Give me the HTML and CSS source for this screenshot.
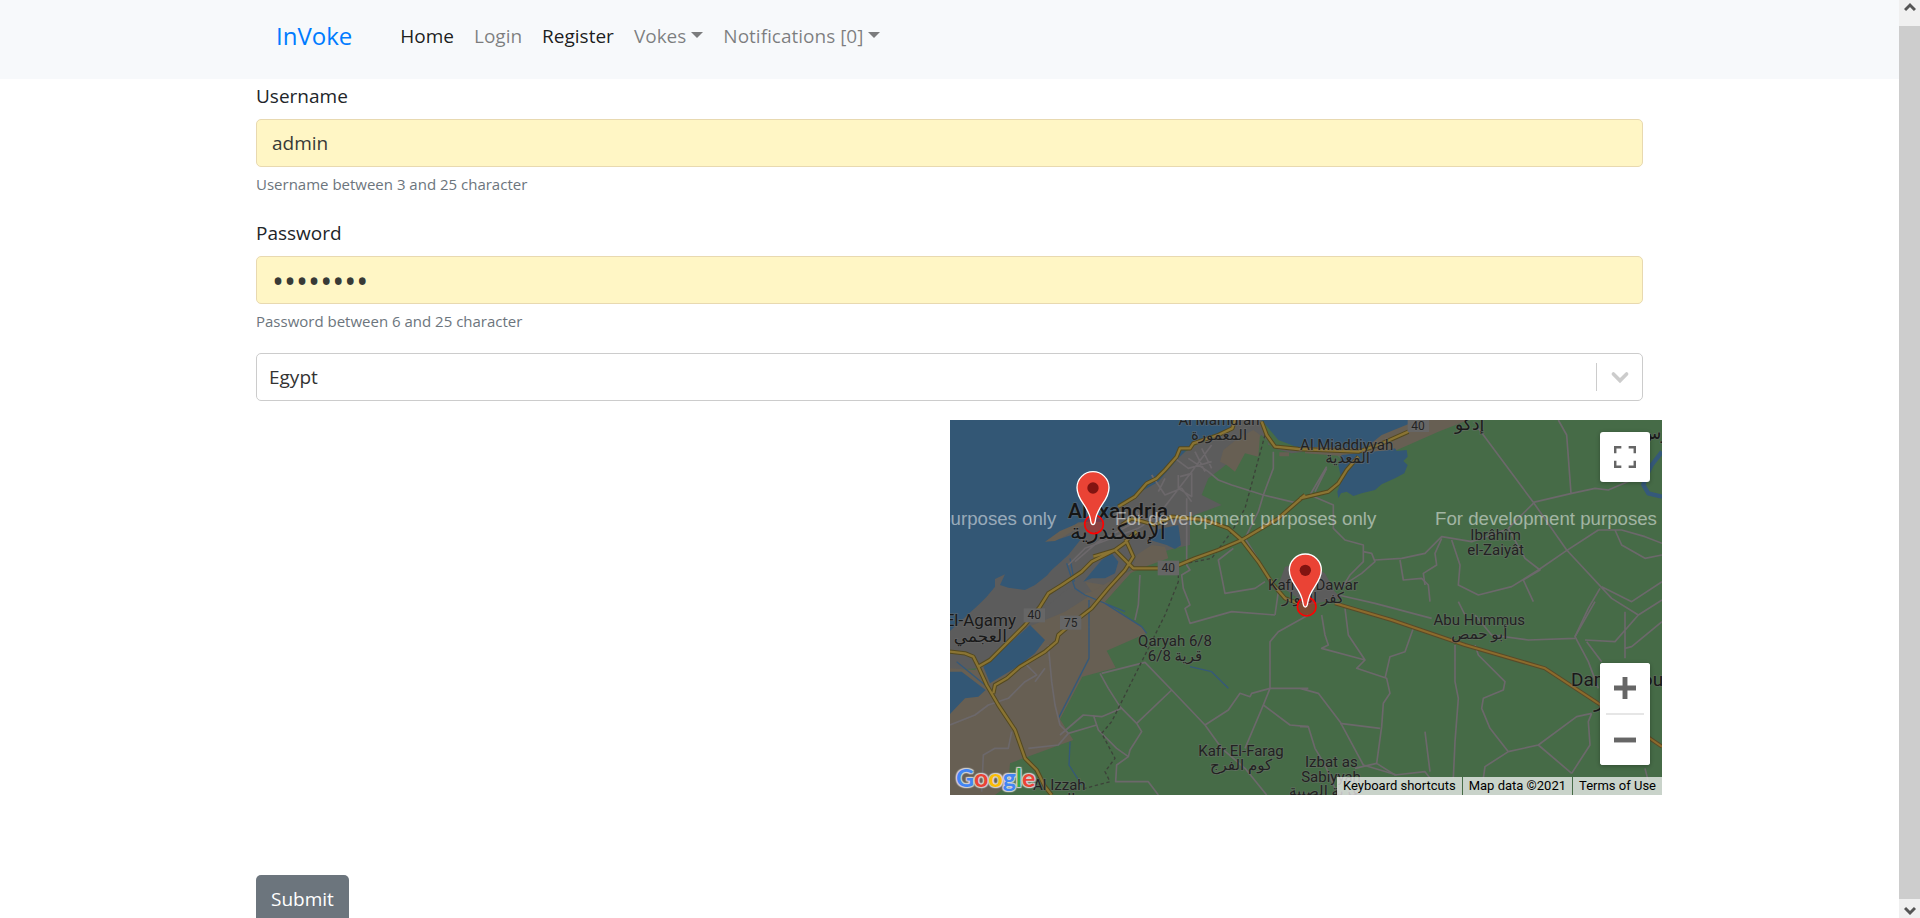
FILE: index.html
```html
<!DOCTYPE html>
<html lang="en">
<head>
<meta charset="utf-8">
<title>InVoke - Register</title>
<link rel="stylesheet" href="styles.css">
</head>
<body>
<div class="shell">
  <div class="page">
    <header class="navbar">
      <nav class="container navbar-inner">
        <a class="brand" href="#">InVoke</a>
        <a class="nav-link active" href="#">Home</a>
        <a class="nav-link" href="#">Login</a>
        <a class="nav-link active" href="#">Register</a>
        <a class="nav-link dropdown" href="#">Vokes</a>
        <a class="nav-link dropdown" href="#">Notifications [0]</a>
      </nav>
    </header>
    <main class="container">
      <form class="form">
        <div class="field">
          <label for="username">Username</label>
          <input class="control" id="username" type="text" value="admin">
          <small>Username between 3 and 25 character</small>
        </div>
        <div class="field">
          <label for="password">Password</label>
          <input class="control control-password" id="password" type="password" value="password">
          <small>Password between 6 and 25 character</small>
        </div>
        <div class="select-wrap">
          <select class="select" aria-label="Country"><option>Egypt</option></select>
          <svg class="chevron" viewBox="0 0 20 20" aria-hidden="true"><path d="M4.500 7.500 10 13l5.500-5.500"/></svg>
        </div>
        <div class="map-row">
          <div class="map">
            <svg class="map-canvas" viewBox="15 15 2136 1125" preserveAspectRatio="xMidYMid slice" role="img" aria-label="Map of Alexandria">
              <rect class="green" x="15" y="15" width="2136" height="1125"/>
              <path class="urban" d="M15 570H60L130 450 290 320 440 290 870 15H950L970 90 1080 110 1040 115 985 100 950 60 900 100 830 160 790 190 770 240 830 270 735 305 735 390 690 400 620 420 520 490 440 575 300 700 100 760 15 765Z"/>
              <path class="sand" d="M885 65 925 45 945 60 940 125 900 115 870 170 845 150 825 140 835 105Z M1003 112H1032V124H1003Z M575 420 620 390 660 395 670 430 600 455 555 475Z M420 500 480 510 540 480 560 470 470 570 450 545Z M300 375 345 345 385 325 360 355 325 375Z"/>
              <path class="sand" d="M15 760 90 765 200 670 290 600 330 555 440 530 510 490 570 460 480 560 590 635 605 655 485 707 512 758 412 785 345 913 385 975 195 1045 190 1110 150 1140H15Z"/>
              <path class="urban" d="M95 760 250 620 370 520 430 545 360 590 240 640 150 720Z M1020 455 1080 440 1140 475 1170 530 1190 550 1090 570 1000 510Z"/>
              <path class="water" d="M15 15H870L850 45 740 90 700 130 640 200 570 240 520 270 500 295 470 320 400 322 360 350 310 376 350 370 335 375 395 355 410 370 370 420 320 465 305 482 270 510 240 525 190 518 165 510 180 478 150 492 150 515 125 545 100 570 15 648Z"/>
              <path class="water" d="M415 500 470 435 500 415 520 440 510 475 480 490 440 490Z M630 345 700 330 708 390 690 402 665 390 615 375Z M115 755 255 630 300 675 270 715 225 750 135 805Z M15 770 50 770 122 825 100 845 60 850 15 897Z"/>
              <path class="water" d="M950 15H1430L1390 30 1250 110 1065 100 1000 75Z"/>
              <path class="sand" d="M1420 15H1570L1480 50 1390 90 1340 112 1220 125 1080 115 1080 95 1260 100 1310 60Z"/>
              <path class="sand" d="M300 380 345 348 400 325 440 318 400 338 350 368 330 378Z"/>
              <path class="water" d="M1190 120 1330 105 1350 100 1355 108 1385 105 1388 125 1375 138 1388 150 1378 175 1350 190 1310 208 1290 225 1250 235 1225 243 1205 230 1188 235 1180 250 1177 230 1190 195 1180 150Z"/>
              <g class="canal">
                <path d="M365 445 390 520 420 540 540 590M432 555V730L340 910M480 565 590 635 605 655M375 430 388 500M735 755 800 770 850 820M375 980 372 1050 410 1110M35 740 120 810"/>
                <path class="canal-wide" d="M2151 110 2120 150 2105 180 2095 210 2110 235 2151 245"/>
              </g>
              <g class="lane">
                <path d="M370 450 420 400 580 340 640 300 740 170 800 90M390 440 460 380 610 300M620 180 660 240 710 220 740 260M560 280 620 330M690 130 730 160 800 140M700 180V220L740 245V175L705 185M660 190 640 230M730 130 790 170 820 195 860 210 955 240 1060 265M750 110 780 170M770 100 800 160M725 250V450L735 465 710 480 715 520 735 570 720 580 735 625 860 590 990 600"/>
                <path d="M865 400 820 435 840 535 930 520 960 500M985 110 985 160 955 240 940 290 900 370 1000 530 990 600M1145 155 1095 240 1165 270 1165 340 1200 375 1255 390 1255 440 1215 480 1190 520M1110 230 1145 160M1255 410 1280 415 1290 440 1250 475 1180 520M1290 435 1370 430 1440 415 1490 365 1580 380 1680 345M1365 435 1375 495 1430 490 1450 510 1455 560"/>
                <path d="M1520 375 1545 450 1540 510 1600 540 1700 515 1780 465 1860 410 1960 345 2030 345 2100 365 2151 385M1490 370 1470 415 1475 450 1435 475 1440 510M1600 40 1765 262 1865 405 2000 550 2080 600M1765 262 1880 235 1950 220 1990 225 2060 195M1840 15 1865 60 1878 235M1765 265 1690 340 1740 430 1785 465 1735 495 1765 560M1965 520 1930 580 1890 665M1970 515 2060 560 2151 500M2010 345 2030 390 2100 430 2151 420"/>
                <path d="M465 775 490 820 525 875 575 925 590 950 555 1005 550 1025 515 1050 512 1100H610L640 1140M345 960 415 900 470 905 530 880M370 955 455 930 M445 900 460 945 515 1000 550 1025M470 775 600 742 680 825 780 930 830 1000 900 1060 965 1140M575 925 680 825M780 930 850 885 885 835 915 845 920 835 975 820 975 680 1000 650 1090 600M975 820 955 870 900 1000M955 870 1035 930 1090 935 1110 1000 1140 1050 1170 1120M1065 820 1120 835 1185 920 1255 1050 1355 1080M975 820 1090 820"/>
                <path d="M1130 600 1140 660 1150 690 1130 700 1260 735 1235 760 1325 790 1335 835 1315 865 1310 935 1295 1045M1185 925 1305 940M1230 1060 1295 1045 1350 1080 1440 1070 1455 1090M1405 640 1380 710 1335 725 1320 790M1200 580 1210 660 1230 690 1260 735M1180 540 1290 565 1460 610M1530 690 1530 800 1540 850 1530 980 1525 1090M1590 690 1600 720 1680 800 1675 825 1615 850 1610 880 1635 940 1690 1010 1620 1055 1615 1090M1690 1010 1780 990 1895 905 1940 895M1780 990 1880 1075M1940 895 1930 920 1935 990 1880 1075M1950 560 1890 665 1930 740 1960 820M1920 675 2010 680 2080 600 2151 555M1890 670 1750 675 1640 660 1590 600M1925 680 1970 740M2040 730V590M2040 700 2060 695 2151 620M1540 560 1560 600"/>
                <path d="M15 930 90 900 130 870 190 850 240 800 275 780 240 745M310 690 320 800 330 870 345 930 370 955 340 990 250 1000M110 1130 115 1020 150 1000 190 1000 200 950M300 760 270 800M585 480 580 570 570 615M1440 950 1455 1070M2110 1100 2100 1060M1065 935 1090 935"/>
              </g>
              <path class="rail" d="M960 60 900 280 860 350 800 430 700 450 700 500 660 600 600 720 500 920 470 955 510 1030 480 1070 495 1100 420 1120"/>
              <g class="road-edge"><path id="roads" d="M870 15 862 40 820 60 745 85 735 100 705 100 695 125 660 165 635 190 605 205 570 245 520 275M530 330 560 310 630 330 680 305 780 315 850 340 890 375 940 440 985 510 1020 550 1060 565M1080 240 1000 310 890 375 820 405 750 430 690 455 640 460 565 460 510 405 445 425M545 380 565 425 540 465 490 520 440 580 375 630 340 660 335 680 300 710 225 755 185 790 150 810 145 835M545 380 510 405 440 440 410 470 350 510 310 535 285 575 240 630 135 735 100 755M15 710 60 715 85 725 100 755 125 810 160 870 210 945 240 1030 275 1065 300 1115 320 1140M1065 250 1150 230 1180 205 1205 165 1240 125M950 20 965 60 990 95 1060 102 1240 110 1300 90 1390 50M575 350 540 380"/></g>
              <use class="road" href="#roads"/>
              <path class="highway-edge" d="M1170 565 1340 615 1560 690 1800 760 1960 865 2151 995"/>
              <path class="highway" d="M1170 565 1340 615 1560 690 1800 760 1960 865 2151 995"/>
              <g class="shield"><rect x="638" y="437" width="64" height="44"/><rect x="236" y="580" width="64" height="42"/><rect x="345" y="602" width="64" height="42"/><rect x="1388" y="5" width="64" height="46"/></g>
              <g class="place place-road"><text x="670" y="472">40</text><text x="268" y="612">40</text><text x="377" y="635">75</text><text x="1419" y="44">40</text></g>
              <g class="place">
                <text x="822" y="30">Al Mamurah</text><text x="822" y="74">المعمورة</text>
                <text x="1205" y="104">Al Miaddiyyah</text><text x="1208" y="144">المعدية</text>
                <text x="1652" y="374">Ibrâhîm</text><text x="1652" y="419">el-Zaiyât</text>
                <text x="1104" y="524">Kafr El Dawar</text><text x="1104" y="564">كفر الدوار</text>
                <text x="1603" y="631">Abu Hummus</text><text x="1603" y="672">أبو حمص</text>
                <text x="690" y="694">Qaryah 6/8</text><text x="690" y="738">قرية 6/8</text>
                <text x="888" y="1022">Kafr El-Farag</text><text x="888" y="1066">كوم الفرج</text>
                <text x="1159" y="1056">Izbat as</text><text x="1158" y="1100">Sabiyyah</text><text x="1140" y="1142">عزبة الصبية</text>
                <text x="343" y="1126">Al Izzah</text><text x="343" y="1166">العزة</text>
              </g>
              <g class="place place-town">
                <text x="106" y="634">El-Agamy</text><text x="106" y="681">العجمي</text>
                <text x="1574" y="46">إدكو</text><text x="2150" y="72">فارس</text>
              </g>
              <g class="place place-capital"><text x="2026" y="814">Damanhour</text><text x="2026" y="876">دمنهور</text></g>
              <text class="place place-city" x="519" y="308">Alexandria</text>
              <text class="place place-city-ar" x="519" y="372">الإسكندرية</text>
              <g class="watermark"><text x="-450" y="329">For development purposes only</text><text x="510" y="329">For development purposes only</text><text x="1470" y="329">For development purposes only</text></g>
              <g class="zone"><circle cx="447" cy="328" r="28"/><circle cx="1085" cy="575" r="28"/></g>
              <defs><g id="pin"><path class="pin-body" d="M0 0C-5 0-6-5-7-12-12-57-48-70-48-111A48 48 0 0 1 48-111C48-70 12-57 7-12 6-5 5 0 0 0Z"/><circle class="pin-dot" cy="-110" r="17"/></g></defs>
              <use href="#pin" x="444" y="329"/><use href="#pin" x="1081" y="576"/>
            </svg>
            <div class="google" aria-label="Google"><span class="g-blue">G</span><span class="g-red">o</span><span class="g-yellow">o</span><span class="g-blue">g</span><span class="g-green">l</span><span class="g-red">e</span></div>
            <button class="map-button fullscreen" type="button" aria-label="Toggle fullscreen"><svg viewBox="0 0 18 18"><path d="M0 0v6h2V2h4V0zM18 0h-6v2h4v4h2zM16 12v4h-4v2h6v-6zM2 12H0v6h6v-2H2z"/></svg></button>
            <div class="zoom">
              <button class="map-button" type="button" aria-label="Zoom in"><svg viewBox="0 0 18 18"><path d="M18 7h-7V0H7v7H0v4h7v7h4v-7h7z"/></svg></button>
              <button class="map-button" type="button" aria-label="Zoom out"><svg viewBox="0 0 18 18"><path d="M0 7h18v4H0z"/></svg></button>
            </div>
            <div class="credits"><button type="button">Keyboard shortcuts</button><span>Map data ©2021</span><a href="#">Terms of Use</a></div>
          </div>
        </div>
        <button class="submit" type="submit">Submit</button>
      </form>
    </main>
  </div>
  <div class="scrollbar">
    <button class="scroll-button scroll-up" type="button" aria-label="Scroll up"><svg viewBox="0 0 12 10"><path d="M1 8 6 3l5 5"/></svg></button>
    <div class="scroll-thumb"></div>
    <button class="scroll-button scroll-down" type="button" aria-label="Scroll down"><svg viewBox="0 0 12 10"><path d="M1 2l5 5 5-5"/></svg></button>
  </div>
</div>
</body>
</html>
```
FILE: styles.css
```css
* { box-sizing: border-box; }
body { margin: 0; background: #fff; color: #212529; font-family: "Segoe UI", "Open Sans", "Noto Sans", sans-serif; font-size: 19px; line-height: 30px; }
button, input, select { font: inherit; color: inherit; }
a { text-decoration: none; }
.shell { display: grid; grid-template-columns: minmax(0, 1fr) 21px; height: 100vh; overflow: hidden; }
.page { overflow: hidden; }
.container { width: 100%; max-width: 1425px; margin: 0 auto; padding: 0 19px; }

.navbar { background: #f7f9fb; padding: 11px 0 18px; }
.navbar-inner { display: flex; align-items: center; height: 50px; padding: 0 39px; }
.brand { color: #007bff; font-size: 24px; margin-right: 38px; }
.nav-link { color: rgba(0, 0, 0, .5); padding: 0 10px; white-space: nowrap; }
.nav-link.active { color: rgba(0, 0, 0, .9); }
.dropdown::after { content: ""; display: inline-block; margin-left: 5px; vertical-align: 5px; border: 6px solid transparent; border-top-color: currentColor; border-bottom: 0; }

.form { display: flex; flex-direction: column; }
.field { display: flex; flex-direction: column; margin-bottom: 20px; }
.field label { padding-top: 2px; margin-bottom: 8px; }
.field small { margin-top: 5px; color: #6c757d; font-size: 15px; line-height: 24px; }
.control { width: 100%; height: 48px; padding: 0 15px; border: 1px solid #e8d9b0; border-radius: 5px; background: #fff6c5; color: #383a36; outline: 0; }
.control-password { font-size: 32px; }
.select-wrap { display: grid; align-items: center; }
.select-wrap > * { grid-area: 1 / 1; }
.select { appearance: none; width: 100%; height: 48px; padding: 0 12px; border: 1px solid #ccc; border-radius: 5px; background: #fff; color: #333; }
.chevron { justify-self: end; width: 47px; height: 28px; padding: 0 11px; border-left: 1px solid #ccc; fill: none; stroke: #ccc; stroke-width: 3; stroke-linecap: round; pointer-events: none; }
.submit { align-self: flex-start; height: 48px; padding: 0 15px; border: 0; border-radius: 5px; background: #6c757d; color: #fff; }

.map-row { display: flex; justify-content: flex-end; margin: 19px -19px 80px 0; }
.map { position: relative; width: 712px; max-width: 100%; height: 375px; overflow: hidden; background: #466b47; font-family: Roboto, sans-serif; }
.map-canvas { display: block; width: 100%; height: 100%; }
.green { fill: #466b47; }
.urban { fill: #5c5c5c; }
.sand { fill: #675f53; }
.water { fill: #335775; }
.lane, .canal, .rail, .road, .road-edge, .highway, .highway-edge { fill: none; stroke-linejoin: round; }
.lane { stroke: #6c686b; stroke-width: 5; }
.canal { stroke: #35597a; stroke-width: 4; }
.canal-wide { stroke-width: 13; }
.rail { stroke: #3c4239; stroke-width: 4; stroke-dasharray: 10 8; }
.road-edge { stroke: #54491f; stroke-width: 13; }
.road { stroke: #8a7433; stroke-width: 7; }
.highway-edge { stroke: #5a4a28; stroke-width: 12; }
.highway { stroke: #8c6b2c; stroke-width: 6; }
.shield { fill: #666; }
.place { fill: #222; stroke: rgba(110, 110, 110, .5); stroke-width: 5; paint-order: stroke; text-anchor: middle; font-family: Roboto, "DejaVu Sans", sans-serif; font-size: 45px; }
.place-road { font-size: 36px; }
.place-town { font-size: 51px; fill: #191919; }
.place-capital { font-size: 57px; fill: #191919; }
.place-city { font-size: 63px; font-weight: 500; fill: #151515; }
.place-city-ar { font-size: 66px; fill: #151515; }
.watermark { fill: rgba(255, 255, 255, .5); font-family: "Liberation Sans", Arial, sans-serif; font-size: 56px; }
.zone { fill: rgba(255, 0, 0, .3); stroke: #f00; stroke-width: 5; }
.pin-body { fill: #ea4335; stroke: #fff; stroke-width: 4; }
.pin-dot { fill: #811411; }
.google { position: absolute; left: 6px; bottom: 0; font: 700 25px/36px Lato, sans-serif; text-shadow: 0 0 2px #ddd, 1px 1px 1px #ccc, -1px -1px 1px #ccc, 1px -1px 1px #ccc, -1px 1px 1px #ccc; }
.g-blue { color: #4285f4; }
.g-red { color: #ea4335; }
.g-yellow { color: #fbbc05; }
.g-green { color: #34a853; }
.map-button { display: flex; align-items: center; justify-content: center; width: 50px; height: 50px; padding: 0; border: 0; border-radius: 3px; background: #fff; }
.map-button svg { width: 22px; height: 22px; fill: #666; }
.fullscreen { position: absolute; top: 12px; right: 12px; box-shadow: 0 1px 4px rgba(0, 0, 0, .3); }
.zoom { position: absolute; right: 12px; bottom: 30px; border-radius: 3px; background: #fff; box-shadow: 0 1px 4px rgba(0, 0, 0, .3); }
.zoom::after { content: ""; position: absolute; top: 50px; left: 6px; right: 6px; height: 2px; background: #e6e6e6; }
.zoom .map-button + .map-button { margin-top: 2px; }
.credits { position: absolute; right: 0; bottom: 0; display: flex; gap: 1px; color: #000; font-size: 13px; line-height: 18px; }
.credits > * { padding: 0 6px; border: 0; background: rgba(245, 245, 245, .75); color: #000; white-space: nowrap; }

.scrollbar { display: flex; flex-direction: column; background: #f0f0f0; }
.scroll-thumb { flex: 1; background: #cdcdcd; }
.scroll-button { display: flex; justify-content: center; align-items: flex-start; height: 26px; padding: 2px 0; border: 0; background: #f0f0f0; }
.scroll-button svg { width: 12px; height: 10px; fill: none; stroke: #555; stroke-width: 3; }
.scroll-down { height: 19px; padding-top: 7px; }
```
